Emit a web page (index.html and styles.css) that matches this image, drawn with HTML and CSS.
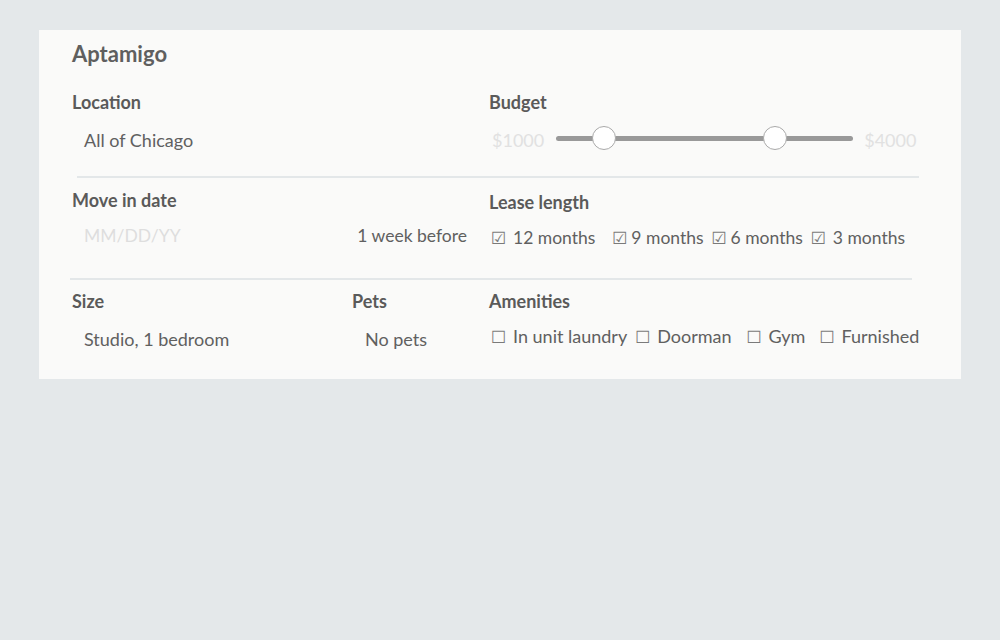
FILE: index.html
```html
<!DOCTYPE html>
<html>
<head>
<meta charset="utf-8">
<link rel="stylesheet" href="styles.css">
</head>
<body>
<div class="card">
  <h1 class="title">Aptamigo</h1>

  <div class="row row1">
    <div class="field">
      <div class="label">Location</div>
      <div class="value">All of Chicago</div>
    </div>
    <div class="field">
      <div class="label">Budget</div>
      <div class="budget">
        <span class="price">$1000</span>
        <div class="slider">
          <div class="track"></div>
          <div class="thumb thumb-a"></div>
          <div class="thumb thumb-b"></div>
        </div>
        <span class="price">$4000</span>
      </div>
    </div>
  </div>
  <div class="sep sep1"></div>

  <div class="row row2">
    <div class="field">
      <div class="label">Move in date</div>
      <div class="value date-row">
        <span class="placeholder">MM/DD/YY</span>
        <span class="before">1 week before</span>
      </div>
    </div>
    <div class="field lease">
      <div class="label">Lease length</div>
      <div class="checks">
        <span class="opt o-12"><span class="box">☑</span>12 months</span>
        <span class="opt o-9"><span class="box">☑</span>9 months</span>
        <span class="opt o-6"><span class="box">☑</span>6 months</span>
        <span class="opt o-3"><span class="box">☑</span>3 months</span>
      </div>
    </div>
  </div>
  <div class="sep sep2"></div>

  <div class="row row3">
    <div class="field">
      <div class="label">Size</div>
      <div class="value">Studio, 1 bedroom</div>
    </div>
    <div class="field">
      <div class="label">Pets</div>
      <div class="value">No pets</div>
    </div>
    <div class="field amen">
      <div class="label">Amenities</div>
      <div class="checks">
        <span class="opt a-1"><span class="box">☐</span>In unit laundry</span>
        <span class="opt a-2"><span class="box">☐</span>Doorman</span>
        <span class="opt a-3"><span class="box">☐</span>Gym</span>
        <span class="opt a-4"><span class="box">☐</span>Furnished</span>
      </div>
    </div>
  </div>
</div>
</body>
</html>
```
FILE: styles.css
```css
html, body {
  margin: 0;
  padding: 0;
  background: #e4e8ea;
  font-family: Lato, "Liberation Sans", sans-serif;
  color: #5b5b5b;
}

.card {
  margin: 30px 0 0 39px;
  width: 922px;
  height: 349px;
  box-sizing: border-box;
  background: #fafaf9;
  padding: 12px 0 0 33px;
}

.title {
  margin: 0;
  font-size: 22px;
  font-weight: 700;
  line-height: 24px;
  color: #5f5f5f;
}

.row {
  display: grid;
  grid-template-columns: 417px 1fr;
}

.row3 {
  grid-template-columns: 280px 137px 1fr;
}

.row1 { margin-top: 25px; }
.row2 { margin-top: 11px; }
.row3 { margin-top: 10px; }

.field {
  display: flex;
  flex-direction: column;
}

.label {
  font-size: 18px;
  font-weight: 700;
  line-height: 22px;
  color: #5a5a5a;
}

.value {
  margin-top: 16px;
  padding-left: 12px;
  font-size: 18px;
  line-height: 22px;
  color: #606060;
}

.row2 .value { margin-top: 14px; font-size: 17.5px; }
.row3 .value { margin-top: 16px; }

.row3 .field:nth-child(2) .value { padding-left: 13px; }

.budget {
  margin-top: 16px;
  display: flex;
  align-items: center;
  height: 22px;
  padding-left: 3px;
}

.price {
  font-size: 18px;
  line-height: 22px;
  color: #e1e1e1;
}

.slider {
  position: relative;
  width: 297px;
  height: 22px;
  margin: 0 11px 0 12px;
}

.track {
  position: absolute;
  left: 0;
  right: 0;
  top: 7px;
  height: 5px;
  border-radius: 3px;
  background: #999;
}

.thumb {
  position: absolute;
  top: -3px;
  width: 24px;
  height: 24px;
  box-sizing: border-box;
  border-radius: 50%;
  background: #fff;
  border: 1px solid #a9a9a9;
}

.thumb-a { left: 36px; }
.thumb-b { left: 207px; }

.sep {
  height: 2px;
  background: #e3e7e9;
}

.sep1 {
  margin: 25px 42px 0 5px;
}

.sep2 {
  margin: 29px 49px 0 -2px;
}

.date-row {
  display: flex;
  justify-content: space-between;
  padding-right: 22px;
}

.placeholder { color: #dedede; }

.lease .checks { margin-top: 14px; }
.lease .label { margin-top: 2px; }

.checks {
  display: flex;
  align-items: center;
  height: 22px;
  font-size: 17.5px;
  line-height: 22px;
  color: #606060;
  padding-left: 2px;
  margin-top: 16px;
}

.amen .checks { margin-top: 13px; padding-left: 2px; font-size: 18px; }

.opt { white-space: nowrap; }

.box {
  display: inline-block;
  width: 22px;
  font-family: "DejaVu Sans", sans-serif;
  font-size: 17px;
  color: #7a7a7a;
}

.o-9 .box, .o-6 .box { width: 19px; }
.o-3 .box { width: 22px; }
.amen .box { width: 22px; }

.o-12 { margin-right: 17px; }
.o-9 { margin-right: 8px; }
.o-6 { margin-right: 8px; }

.a-1 { margin-right: 8px; }
.a-2 { margin-right: 15px; }
.a-3 { margin-right: 14px; }
```
